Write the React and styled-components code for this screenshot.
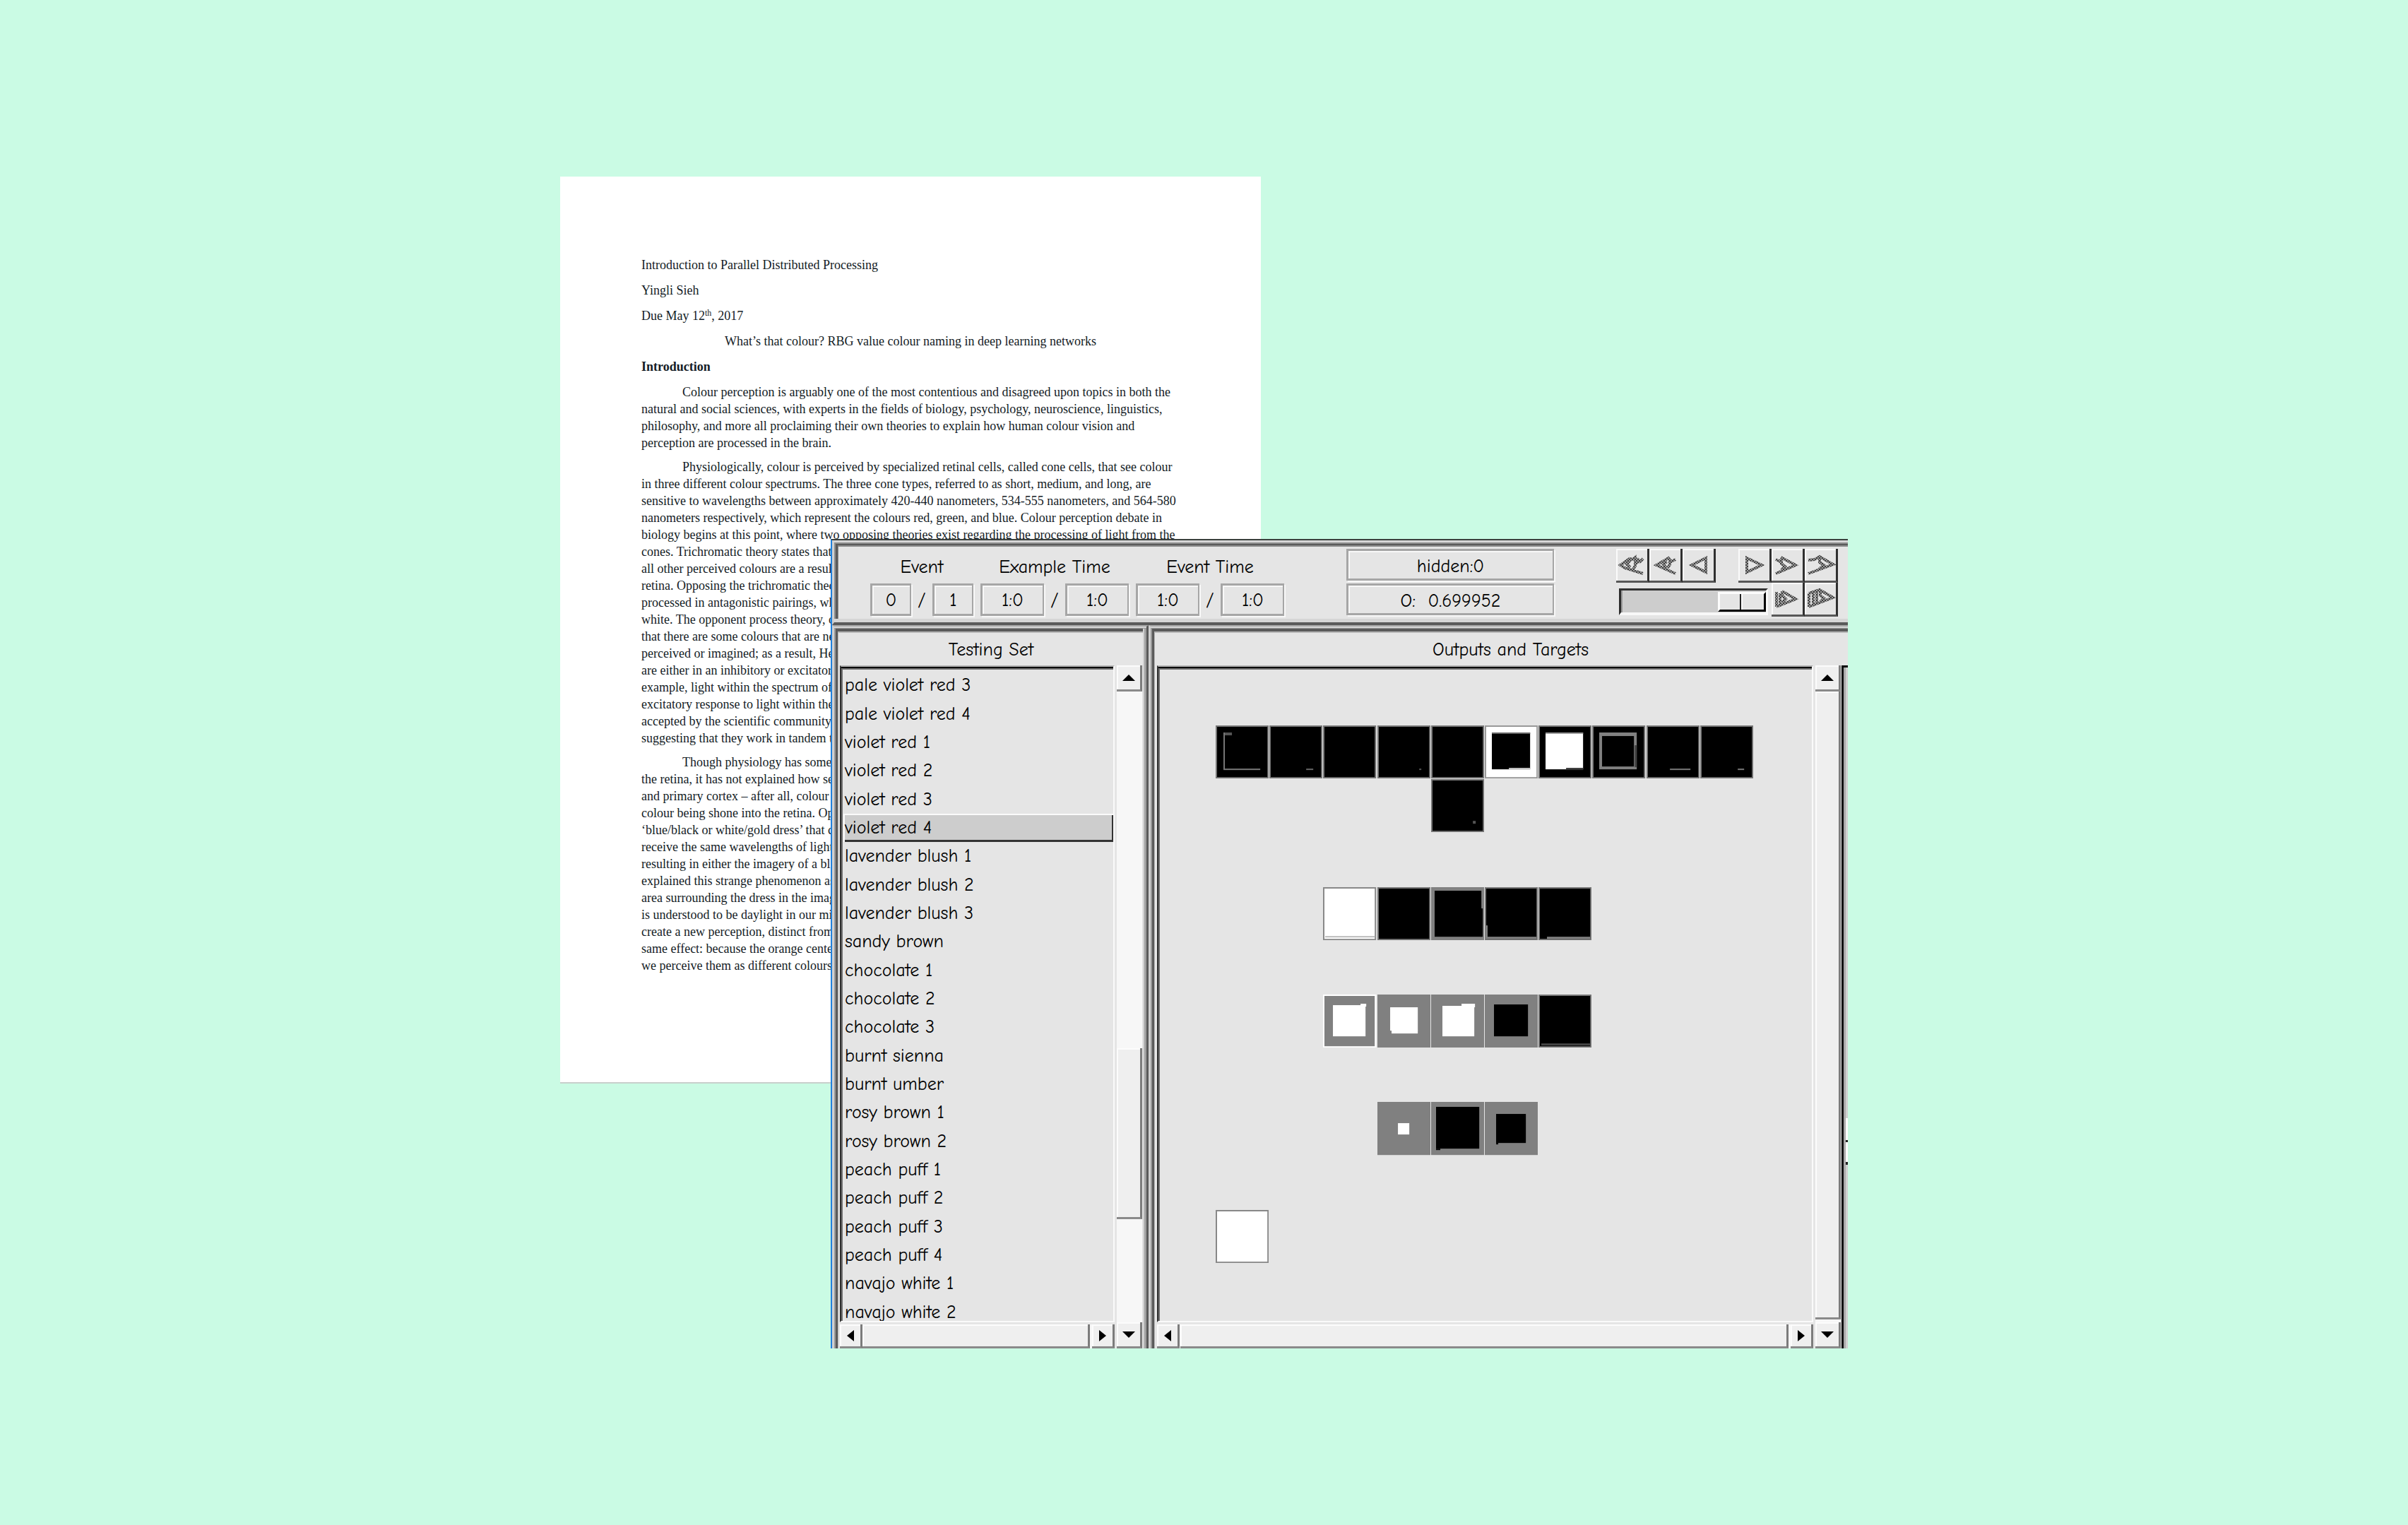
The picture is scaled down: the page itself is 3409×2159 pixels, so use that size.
import React, { useState } from "react";
import styled, { createGlobalStyle, css } from "styled-components";

const face = "#e5e5e5";
const dark = "#5a5a5a";

const GlobalStyle = createGlobalStyle`
  *, *::before, *::after { box-sizing: border-box; }
  body { margin: 0; background: #cafbe4; }
  button, input, output { font: inherit; color: inherit; }
`;

const Desktop = styled.main`
  min-height: 100vh;
  display: grid;
  justify-items: center;
  align-content: center;
  background: #cafbe4;
`;

const Stage = styled.div`
  width: 100%;
  max-width: 1823px;
  display: grid;
  grid-template-columns: minmax(0, 1fr);

  > * { grid-area: 1 / 1; }
`;

/* ---------- essay page ---------- */

const Paper = styled.article`
  justify-self: start;
  align-self: start;
  width: 992px;
  min-height: 1284px;
  padding: 113px 115px 0;
  background: #fff;
  border-bottom: 2px solid #c8cfcc;
  color: #141c26;
  font: 18px/24px "Liberation Serif", "Times New Roman", serif;
`;

const Heading = styled.p`
  margin: 0 0 12px;
  text-align: ${(p) => (p.$center ? "center" : "left")};
  font-weight: ${(p) => (p.$bold ? 700 : 400)};
  sup { font-size: 12px; line-height: 1; vertical-align: 6px; }
`;

const Paragraph = styled.p`
  margin: 0 0 10px;
  text-indent: 58px;
  white-space: pre;
`;

const paragraphs = [
  `Colour perception is arguably one of the most contentious and disagreed upon topics in both the
natural and social sciences, with experts in the fields of biology, psychology, neuroscience, linguistics,
philosophy, and more all proclaiming their own theories to explain how human colour vision and
perception are processed in the brain.`,
  `Physiologically, colour is perceived by specialized retinal cells, called cone cells, that see colour
in three different colour spectrums. The three cone types, referred to as short, medium, and long, are
sensitive to wavelengths between approximately 420-440 nanometers, 534-555 nanometers, and 564-580
nanometers respectively, which represent the colours red, green, and blue. Colour perception debate in
biology begins at this point, where two opposing theories exist regarding the processing of light from the
cones. Trichromatic theory states that
all other perceived colours are a result
retina. Opposing the trichromatic theory
processed in antagonistic pairings, wh
white. The opponent process theory, o
that there are some colours that are ne
perceived or imagined; as a result, He
are either in an inhibitory or excitatory
example, light within the spectrum of
excitatory response to light within the
accepted by the scientific community,
suggesting that they work in tandem t`,
  `Though physiology has some
the retina, it has not explained how se
and primary cortex – after all, colour
colour being shone into the retina. Op
‘blue/black or white/gold dress’ that c
receive the same wavelengths of light
resulting in either the imagery of a bl
explained this strange phenomenon as
area surrounding the dress in the image
is understood to be daylight in our mi
create a new perception, distinct from
same effect: because the orange center
we perceive them as different colours`,
];

/* ---------- viewer window ---------- */

const Viewer = styled.section`
  margin: 513px 0 0 383px;
  border-left: 2px solid #1f80dd;
  border-top: 2px solid #3a403d;
  background: ${face};
  color: #000;
  font: 26px/32px "Comic Neue", "Comic Sans MS", "Noto Sans", sans-serif;
  position: relative;
  overflow: hidden;
`;

const Toolbar = styled.header`
  display: flex;
  justify-content: space-between;
  height: 120px;
  padding: 9px 14px 0 51px;
  border-top: 3px solid #d6d6d6;
  border-left: 3px solid #d0d0d0;
  border-bottom: 4px solid ${dark};
  box-shadow: inset 0 -5px #d6d6d6, inset 2px 2px #8c8c8c,
    inset 5px 4px ${dark}, inset 6px 6px #8c8c8c;
`;

const Counters = styled.div`
  display: flex;
  gap: 10px;
`;

const Counter = styled.fieldset`
  display: grid;
  grid-template-columns: ${(p) => p.$box}px 30px ${(p) => p.$box}px;
  grid-template-rows: 45px 45px;
  row-gap: 4px;
  align-items: center;
  text-align: center;
  margin: 0;
  padding: 0;
  border: 0;
`;

const CounterLabel = styled.span`
  grid-column: 1 / -1;
  padding-top: 6px;
`;

const etched = css`
  border: 3px solid #a6a6a6;
  border-right-width: 2px;
  box-shadow: inset 2px 2px #f8f8f8, 2px 2px #f8f8f8;
  background: ${face};
`;

const CounterField = styled.input`
  width: 100%;
  height: 46px;
  padding: 2px 0 0;
  border-radius: 0;
  text-align: center;
  outline: none;
  ${etched}
`;

const Readouts = styled.div`
  display: grid;
  grid-template-rows: 45px 45px;
  gap: 4px;
  width: 294px;
`;

const Readout = styled.output`
  display: flex;
  align-items: center;
  justify-content: center;
  padding-top: 4px;
  white-space: pre;
  ${etched}
`;

const Transport = styled.div`
  width: 314px;
`;

const TransportRow = styled.div`
  display: flex;
  justify-content: space-between;
`;

const Keys = styled.div`
  display: flex;
`;

const Key = styled.button`
  width: 47px;
  height: 48px;
  padding: 0;
  display: block;
  background: ${face};
  border: 0 solid #303030;
  border-right-width: 3px;
  border-bottom-width: 3px;
  border-bottom-color: #585858;
  box-shadow: inset 2px 2px #fafafa;
  svg { display: block; }
`;

const Position = styled.input`
  appearance: none;
  width: 211px;
  height: 38px;
  margin: 8px 0 0 4px;
  background: #cdcdcd;
  border: 3px solid #2c2c2c;
  border-top-color: #333;
  border-right-color: #f8f8f8;
  border-bottom: 4px solid #f8f8f8;
  box-shadow: inset 2px 0 #999;

  &::-webkit-slider-thumb {
    appearance: none;
    width: 68px;
    height: 28px;
    border: 3px solid #000;
    border-top-color: #fcfcfc;
    border-left-color: #fcfcfc;
    background: linear-gradient(90deg, ${face} 28px, #222 28px, #222 30px, #fafafa 30px, #fafafa 32px, ${face} 32px);
  }
`;

const Panels = styled.div`
  display: grid;
  grid-template-columns: 448px minmax(0, 1fr);
`;

const Panel = styled.section`
  padding: 0 ${(p) => p.$right}px 0 ${(p) => p.$left}px;
  border-top: 2px solid #a8a8a8;
  border-left: 3px solid #d0d0d0;
  border-right: ${(p) => (p.$divided ? `3px solid ${dark}` : "0")};
  box-shadow: inset 0 2px #d4d4d4, inset 2px 3px #999,
    ${(p) => p.$divided && "inset -3px 0 #a0a0a0, inset -5px 0 #d0d0d0,"}
    inset 5px 7px ${dark}, inset 6px 9px #b8b8b8;
`;

const PanelTitle = styled.h2`
  margin: 0;
  padding: 17px 0 6px ${(p) => p.$shift || 0}px;
  height: 55px;
  font: inherit;
  text-align: center;
`;

const PanelBody = styled.div`
  display: flex;
  gap: 3px;
`;

const Column = styled.div`
  flex: 1;
  min-width: 0;
  display: flex;
  flex-direction: column;
  gap: 3px;
`;

const sunken = css`
  height: 930px;
  border-top: 2px solid #b0b0b0;
  border-left: 2px solid #2e2e2e;
  border-right: 2px solid #fafafa;
  border-bottom: 2px solid #fafafa;
  box-shadow: inset 0 2px #080808, inset 2px 4px #6e6e6e;
  overflow: hidden;
`;

const NameList = styled.div`
  ${sunken}
  padding: 6px 0 0 3px;
`;

const NameRows = styled.div`
  height: 928px;
  display: flex;
  flex-direction: column;
`;

const Name = styled.button`
  flex: 1;
  min-height: 0;
  display: flex;
  align-items: center;
  padding: 0 2px;
  border: 0;
  text-align: left;
  background: transparent;
  ${(p) =>
    p.$selected &&
    css`
      background: #cdcdcd;
      box-shadow: inset 2px 2px #fafafa, inset -2px -3px #333;
    `}
`;

const Canvas = styled.div`
  ${sunken}
  padding: 83px 0 0 81px;
`;

const UnitGrid = styled.div`
  width: 761px;
  height: 761px;
  display: grid;
  grid-template: repeat(10, minmax(0, 1fr)) / repeat(10, minmax(0, 1fr));
  gap: 1px;
`;

const Unit = styled.svg`
  grid-area: ${(p) => p.$row} / ${(p) => p.$col};
  width: 100%;
  height: 100%;
  display: block;
`;

const Scrollbar = styled.div`
  display: flex;
  flex: none;
  background: #f7f7f7;
  ${(p) =>
    p.$vertical
      ? css`
          flex-direction: column;
          width: 36px;
        `
      : css`
          height: 34px;
        `}
`;

const raised = css`
  padding: 0;
  background: #efefef;
  border: 0 solid #8a8a8a;
  border-right: 3px solid #7c7c7c;
  border-bottom-width: 3px;
  box-shadow: inset 2px 2px #fcfcfc;
`;

const Arrow = styled.button`
  ${raised}
  flex: none;
  display: grid;
  place-items: center;
  width: ${(p) => (p.$vertical ? 36 : 32)}px;
  height: ${(p) => (p.$vertical ? 37 : 34)}px;
  svg { display: block; }
`;

const Thumb = styled.div`
  ${raised}
  flex: ${(p) => p.$size} 0 0;
`;

const Space = styled.div`
  flex: ${(p) => p.$size} 0 0;
`;

const NextPane = styled.div`
  width: 9px;
  align-self: stretch;
  margin-left: -2px;
  display: flex;
  flex-direction: column;
  justify-content: flex-start;
  background: linear-gradient(90deg, #0c0c0c 3px, #aaa 3px, #aaa 6px, #d0d0d0 6px);
  border-top: 3px solid #080808;
`;

const NextPaneMark = styled.div`
  margin: 638px 0 0 6px;
  height: 66px;
  background: linear-gradient(#fff 31px, #222 31px, #222 34px, #fff 34px, #fff 62px, #222 62px);
`;

/* ---------- drawings ---------- */

const keyShapes = {
  back3: "M38 14L34 18L31 15L28 19L27 12L23 15L19 14L6 23L12 27L38 35M27 14V24L24 29M32 18L27 21M20 16L15 22L20 26",
  back2: "M37 15L31 18L27 13L10 23L37 35M29 16V22L26 27M25 18L20 22L24 27",
  back1: "M33 13L13 23L33 33Z",
  next1: "M12 13L33 23L12 33Z",
  next2: "M6 15L12 18L15 13L34 23L6 35M14 15V21L19 25L14 30",
  next3: "M5 16L14 15L21 11L40 22L5 35M21 13V19L27 23L20 29",
  fast2: "M7 13V34M12 15V31M15 12L34 23L7 34M15 12V18L20 23L15 28",
  fast3: "M6 15V34M12 14V31M17 13V29M6 15L21 10L40 21L6 34M22 12V18L27 22L22 27",
};

const KeyIcon = ({ name }) => (
  <svg width="44" height="45" viewBox="0 0 44 45" aria-hidden="true">
    <defs>
      <pattern id={`weave-${name}`} width="4" height="4" patternUnits="userSpaceOnUse">
        <rect width="4" height="4" fill="#9c9c9c" />
        <rect width="2" height="2" fill="#3c3c3c" />
        <rect x="2" y="2" width="2" height="2" fill="#444" />
      </pattern>
    </defs>
    <path d={keyShapes[name]} fill="none" stroke={`url(#weave-${name})`} strokeWidth="4" />
  </svg>
);

const arrowShapes = {
  up: "M9 1L18 10H0Z",
  down: "M0 1H18L9 10Z",
  left: "M11 0V16L1 8Z",
  right: "M1 0V16L11 8Z",
};

const ScrollArrow = ({ dir }) => {
  const vertical = dir === "up" || dir === "down";
  return (
    <Arrow $vertical={vertical} type="button" aria-label={`Scroll ${dir}`}>
      <svg width={vertical ? 18 : 12} height={vertical ? 11 : 16} aria-hidden="true">
        <path d={arrowShapes[dir]} fill="#000" />
      </svg>
    </Arrow>
  );
};

const Bar = ({ vertical, before, size, after }) => (
  <Scrollbar $vertical={vertical}>
    <ScrollArrow dir={vertical ? "up" : "left"} />
    <Space $size={before} />
    <Thumb $size={size} />
    <Space $size={after} />
    <ScrollArrow dir={vertical ? "down" : "right"} />
  </Scrollbar>
);

/* Each unit: grid place, outer fill, edge colour, then [x, y, w, h, fill] marks. */
const K = "#000";
const W = "#fff";
const G = "#808080";
const units = [
  [1, 1, K, "#777", [[11, 10, 12, 4, "#555"], [11, 10, 2, 52, "#777"], [11, 61, 52, 2, "#777"]]],
  [1, 2, K, "#777", [[52, 61, 10, 2, "#666"]]],
  [1, 3, K, "#777", []],
  [1, 4, K, "#777", [[59, 61, 3, 2, "#555"]]],
  [1, 5, K, "#777", []],
  [1, 6, W, "#999", [[10, 10, 54, 52, K], [10, 10, 54, 2, "#666"], [34, 60, 30, 2, "#ccc"]]],
  [1, 7, K, "#777", [[10, 10, 53, 52, W], [10, 10, 53, 2, "#999"], [39, 60, 24, 3, "#333"]]],
  [1, 8, K, "#777", [[10, 10, 53, 52, G], [14, 15, 45, 43, K], [60, 28, 3, 31, "#444"]]],
  [1, 9, K, "#777", [[33, 61, 29, 2, "#777"]]],
  [1, 10, K, "#777", [[53, 61, 9, 2, "#777"]]],
  [2, 5, K, "#777", [[59, 59, 4, 4, "#555"]]],
  [4, 3, W, "#888", [[3, 69, 70, 2, "#bbb"]]],
  [4, 4, K, "#777", []],
  [4, 5, G, G, [[5, 5, 66, 65, K], [70, 30, 3, 40, K]]],
  [4, 6, K, "#777", [[1, 54, 3, 19, G], [3, 70, 70, 3, G]]],
  [4, 7, K, "#777", [[12, 70, 61, 3, G]]],
  [6, 3, G, W, [[14, 15, 46, 44, W], [53, 13, 8, 4, W]]],
  [6, 4, G, G, [[18, 18, 39, 33, W], [20, 50, 37, 5, W]]],
  [6, 5, G, G, [[16, 16, 45, 43, W], [43, 13, 19, 5, W]]],
  [6, 6, G, G, [[13, 14, 48, 45, K]]],
  [6, 7, K, "#777", [[4, 69, 69, 3, "#444"]]],
  [8, 4, G, G, [[29, 30, 16, 16, W]]],
  [8, 5, G, G, [[7, 7, 61, 59, K], [7, 66, 6, 2, K]]],
  [8, 6, G, G, [[16, 17, 42, 41, K], [16, 58, 3, 2, K]]],
  [10, 1, W, "#888", []],
];

const names = [
  "pale violet red 3", "pale violet red 4", "violet red 1", "violet red 2", "violet red 3",
  "violet red 4", "lavender blush 1", "lavender blush 2", "lavender blush 3", "sandy brown",
  "chocolate 1", "chocolate 2", "chocolate 3", "burnt sienna", "burnt umber", "rosy brown 1",
  "rosy brown 2", "peach puff 1", "peach puff 2", "peach puff 3", "peach puff 4",
  "navajo white 1", "navajo white 2",
];

const counters = [
  { label: "Event", box: 58, values: ["0", "1"] },
  { label: "Example Time", box: 90, values: ["1:0", "1:0"] },
  { label: "Event Time", box: 90, values: ["1:0", "1:0"] },
];

const KeyGroup = ({ keys }) => (
  <Keys>
    {keys.map((k) => (
      <Key key={k} type="button" aria-label={k}>
        <KeyIcon name={k} />
      </Key>
    ))}
  </Keys>
);

export default function App() {
  const [selected, setSelected] = useState("violet red 4");
  const [position, setPosition] = useState(100);

  return (
    <>
      <GlobalStyle />
      <Desktop>
        <Stage>
          <Paper>
            <Heading>Introduction to Parallel Distributed Processing</Heading>
            <Heading>Yingli Sieh</Heading>
            <Heading>Due May 12<sup>th</sup>, 2017</Heading>
            <Heading $center>What’s that colour? RBG value colour naming in deep learning networks</Heading>
            <Heading $bold>Introduction</Heading>
            {paragraphs.map((text) => (
              <Paragraph key={text.slice(0, 20)}>{text}</Paragraph>
            ))}
          </Paper>

          <Viewer>
            <Toolbar>
              <Counters>
                {counters.map((c) => (
                  <Counter key={c.label} $box={c.box}>
                    <CounterLabel>{c.label}</CounterLabel>
                    <CounterField readOnly value={c.values[0]} aria-label={`${c.label} current`} />
                    <span>/</span>
                    <CounterField readOnly value={c.values[1]} aria-label={`${c.label} total`} />
                  </Counter>
                ))}
              </Counters>
              <Readouts>
                <Readout>hidden:0</Readout>
                <Readout>{"O:  0.699952"}</Readout>
              </Readouts>
              <Transport>
                <TransportRow>
                  <KeyGroup keys={["back3", "back2", "back1"]} />
                  <KeyGroup keys={["next1", "next2", "next3"]} />
                </TransportRow>
                <TransportRow>
                  <Position
                    type="range"
                    aria-label="Position"
                    value={position}
                    onChange={(e) => setPosition(e.target.value)}
                  />
                  <KeyGroup keys={["fast2", "fast3"]} />
                </TransportRow>
              </Transport>
            </Toolbar>

            <Panels>
              <Panel $left={8} $right={6} $divided>
                <PanelTitle>Testing Set</PanelTitle>
                <PanelBody>
                  <Column>
                    <NameList>
                      <NameRows>
                        {names.map((n) => (
                          <Name key={n} type="button" $selected={n === selected} onClick={() => setSelected(n)}>
                            {n}
                          </Name>
                        ))}
                      </NameRows>
                    </NameList>
                    <Bar before={0} size={320} after={3} />
                  </Column>
                  <Bar vertical before={507} size={240} after={146} />
                </PanelBody>
              </Panel>

              <Panel $left={9} $right={0}>
                <PanelTitle $shift={23}>Outputs and Targets</PanelTitle>
                <PanelBody>
                  <Column>
                    <Canvas>
                      <UnitGrid>
                        {units.map(([row, col, fill, edge, marks]) => (
                          <Unit key={`${row}-${col}`} $row={row} $col={col} viewBox="0 0 75 75">
                            <rect x="1" y="1" width="73" height="73" fill={fill} stroke={edge} strokeWidth="2" />
                            {marks.map(([x, y, w, h, f], i) => (
                              <rect key={i} x={x} y={y} width={w} height={h} fill={f} />
                            ))}
                          </Unit>
                        ))}
                      </UnitGrid>
                    </Canvas>
                    <Bar before={1} size={860} after={3} />
                  </Column>
                  <Bar vertical before={0} size={890} after={4} />
                  <NextPane>
                    <NextPaneMark />
                  </NextPane>
                </PanelBody>
              </Panel>
            </Panels>
          </Viewer>
        </Stage>
      </Desktop>
    </>
  );
}
